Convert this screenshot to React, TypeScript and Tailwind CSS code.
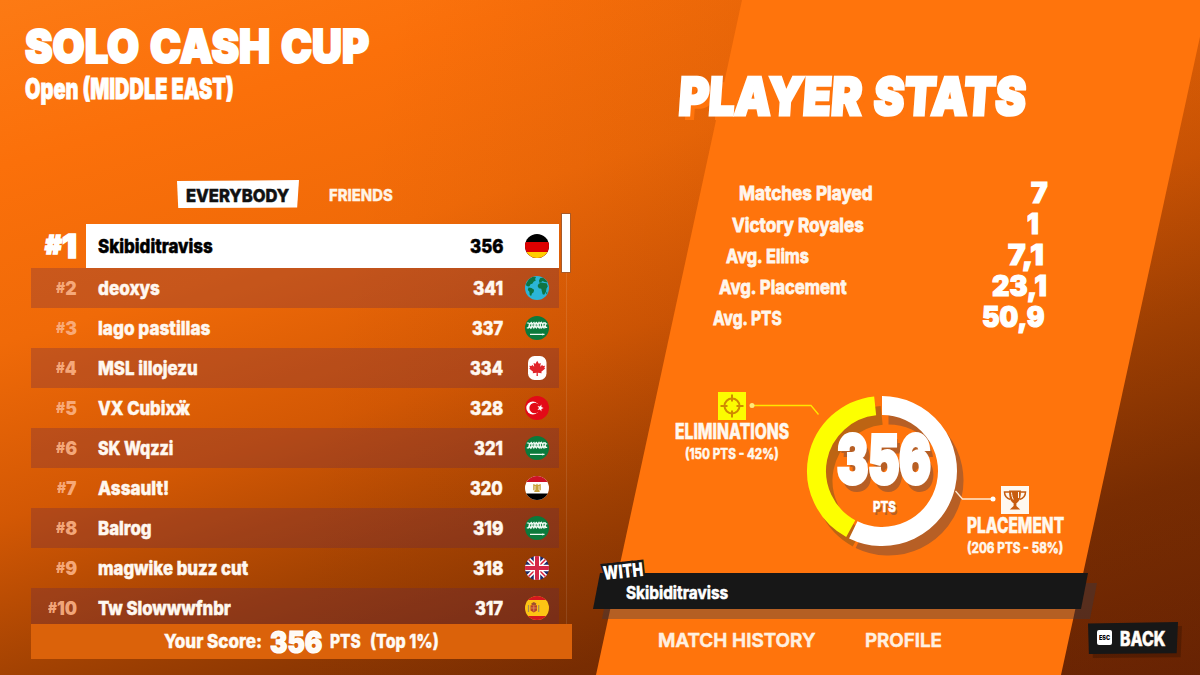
import { useLayoutEffect, useRef, useState, type ReactNode } from "react";
import clsx from "clsx";

type FlagName = "de" | "world" | "sa" | "ca" | "tr" | "eg" | "gb" | "es";

const players: { rank: number; name: string; nameW: number; score: number; scoreW: number; rankW: number; flag: FlagName }[] = [
  { rank: 1, name: "Skibiditraviss", nameW: 115, score: 356, scoreW: 33, rankW: 32, flag: "de" },
  { rank: 2, name: "deoxys", nameW: 62, score: 341, scoreW: 30, rankW: 21, flag: "world" },
  { rank: 3, name: "lago pastillas", nameW: 112, score: 337, scoreW: 31, rankW: 21, flag: "sa" },
  { rank: 4, name: "MSL illojezu", nameW: 100, score: 334, scoreW: 33, rankW: 21, flag: "ca" },
  { rank: 5, name: "VX Cubixӝ", nameW: 92, score: 328, scoreW: 33, rankW: 21, flag: "tr" },
  { rank: 6, name: "SK Wqzzi", nameW: 75, score: 321, scoreW: 29, rankW: 21, flag: "sa" },
  { rank: 7, name: "Assault!", nameW: 71, score: 320, scoreW: 33, rankW: 20, flag: "eg" },
  { rank: 8, name: "Balrog", nameW: 54, score: 319, scoreW: 30, rankW: 21, flag: "sa" },
  { rank: 9, name: "magwike buzz cut", nameW: 150, score: 318, scoreW: 30, rankW: 21, flag: "gb" },
  { rank: 10, name: "Tw Slowwwfnbr", nameW: 133, score: 317, scoreW: 28, rankW: 29, flag: "es" },
];

const stats = [
  { label: "Matches Played", labelW: 134, value: "7", valueW: 17, row: "ml-[139px] mr-[152px]" },
  { label: "Victory Royales", labelW: 132, value: "1", valueW: 12, row: "ml-[132px] mr-[161px]" },
  { label: "Avg. Elims", labelW: 83, value: "7,1", valueW: 36, row: "ml-[126px] mr-[156px]" },
  { label: "Avg. Placement", labelW: 128, value: "23,1", valueW: 55, row: "ml-[119px] mr-[153px]" },
  { label: "Avg. PTS", labelW: 69, value: "50,9", valueW: 63, row: "ml-[113px] mr-[155px]" },
];

// Squeezes a line of text to a fixed width, for the condensed display look
function Fit({ w, className, children }: { w: number; className?: string; children: ReactNode }) {
  const ref = useRef<HTMLSpanElement>(null);
  const [scale, setScale] = useState(1);

  useLayoutEffect(() => {
    if (ref.current) setScale(w / ref.current.offsetWidth);
  }, [w, children]);

  return (
    <span className={clsx("inline-block shrink-0 whitespace-nowrap", className)} style={{ width: w }}>
      <span ref={ref} className="inline-block origin-left" style={{ transform: `scaleX(${scale})` }}>
        {children}
      </span>
    </span>
  );
}

function SaudiFlag() {
  return (
    <>
      <rect width="24" height="24" fill="#0b7a3b" />
      <g fill="none" stroke="#f0faf3">
        <path d="M1.800 7h2l1 1.400 1.400-2 1.200 1.600L9 6.400l1 2 1.600-1.800 1 1.800 1.400-2 1.200 1.800 1.400-1.800 1 1.800 1.400-1.600 1.400 1.200h1.800" strokeWidth="1.200" />
        <path d="M1.800 11.800h1.800l.8-2.200 1.400 2.400 1.600-2 1.400 2 1-2.400 1.600 2.200 1.400-2 1.400 2.200 1-2.200 1.400 2 1.200-2 1.200 2 1-2 .8 1.600h1.400" strokeWidth="1.300" />
        <path d="M4.200 7v5M6.600 6v6.500M9 8v4M11 6v6M13.400 7v5M15.600 6v6.500M18 7v5M20.400 6.200v6" strokeWidth=".9" />
        <path d="M5 18.400h14.500M17.600 17.600v1.600" strokeWidth="1.200" />
      </g>
    </>
  );
}

function Flag({ name }: { name: FlagName }) {
  return (
    <svg viewBox="0 0 24 24" className={clsx("size-6 shrink-0", name === "ca" ? "" : "rounded-full")}>
      {name === "de" && (
        <>
          <rect width="24" height="24" fill="#000" />
          <rect y="8" width="24" height="16" fill="#dd0000" />
          <rect y="18" width="24" height="6" fill="#ffce00" />
        </>
      )}
      {name === "world" && (
        <>
          <rect width="24" height="24" fill="#2bb5d8" />
          <g fill="#0e7443">
            <path d="M1 8l3-5 4-2.500 3 .6-1 2.200 1 1-2.400 1.500-1.300 2-1.800.5-.8 1.600-1 .6L1.500 10z" />
            <path d="M3.500 11.500l3 .4 2.600 1.800-.5 2.500-1.600 1.200-.9 2.600-1.400-1-.3-3.200L2.800 14z" />
            <path d="M13.500 8l2.500-1.600 3 .5 2.600.3 1.200 3-1.300 2.300-.5 3.200-1.800 3-1.600-.4-.8-3.300-.5-2.200-2.500-.6-1.200-2.200z" />
            <path d="M14 4.600l1-2.400 3-.6 3.500 3 1.400 2-3.200-.5-2.200-1-1.700 1.400-1.500.2zM21.200 16.800l.9-1.400.2 2-.9 1z" />
          </g>
        </>
      )}
      {name === "sa" && <SaudiFlag />}
      {name === "ca" && (
        <>
          <rect x="3" width="18.500" height="24" rx="6.500" fill="#fff" />
          <path
            d="M12.200 4.800l1.700 3 1.900-.9-.6 3.800 2.100-1.900.5 1.200 2.300-.3-.8 2.200 1 .7-4 3.200.4 1.500-3.900-.5.1 3.200h-1.400l.1-3.200-3.900.5.4-1.500-4-3.200 1-.7-.8-2.200 2.300.3.5-1.200 2.100 1.900-.6-3.800 1.900.9z"
            fill="#e0242b"
          />
        </>
      )}
      {name === "tr" && (
        <>
          <rect width="24" height="24" fill="#e30a17" />
          <circle cx="7.800" cy="12" r="6.500" fill="#fff" />
          <circle cx="9.600" cy="12" r="5.200" fill="#e30a17" />
          <path d="M18.600 12l-2.200.9v2.500l-1.500-2-2.400.7 1.500-2.100-1.500-2.100 2.400.7 1.500-2v2.500z" fill="#fff" />
        </>
      )}
      {name === "eg" && (
        <>
          <rect width="24" height="24" fill="#fff" />
          <rect width="24" height="6" fill="#ce1126" />
          <rect y="17.500" width="24" height="6.500" fill="#000" />
          <path d="M12 7.400l1 1.600 2.800-.9v6.400l-1.600-1 .6 2.500H9.200l.6-2.500-1.600 1V8.100l2.800.9z" fill="#c9a23c" />
          <path d="M10 10v4M14 10v4" stroke="#fff" strokeWidth=".7" />
        </>
      )}
      {name === "gb" && (
        <>
          <rect width="24" height="24" fill="#1f2c6d" />
          <path d="M0 0l24 24M24 0L0 24" stroke="#fff" strokeWidth="4.500" />
          <path d="M0 0l24 24M24 0L0 24" stroke="#d8203a" strokeWidth="1.500" />
          <path d="M12 0v24M0 12h24" stroke="#fff" strokeWidth="6.500" />
          <path d="M12 0v24M0 12h24" stroke="#d42748" strokeWidth="4" />
        </>
      )}
      {name === "es" && (
        <>
          <rect width="24" height="24" fill="#fdc414" />
          <rect width="24" height="4" fill="#d5171f" />
          <rect y="20" width="24" height="4" fill="#d5171f" />
          <path d="M3.500 9v7M13.700 9v7" stroke="#a58a58" strokeWidth="1.200" />
          <path d="M5.500 9.200h6.500v5.300l-3.200 2-3.300-2z" fill="#b8402a" />
          <path d="M6.200 7.600l2.600-1.600 2.600 1.600-.6 1.300h-4z" fill="#a0522d" />
          <path d="M8.800 9.500v6M5.800 12h6" stroke="#e3a35a" strokeWidth=".7" />
        </>
      )}
    </svg>
  );
}

function PlayerRow({ player }: { player: (typeof players)[number] }) {
  const first = player.rank === 1;

  return (
    <div
      className={clsx(
        "flex shrink-0 items-center",
        first ? "h-11 text-black" : "h-10 text-[#fff8f0]",
        !first && player.rank % 2 === 0 && "bg-[#5c2350]/28"
      )}
    >
      <div
        className={clsx(
          "flex w-[55px] shrink-0 items-center justify-end self-stretch pr-[9px]",
          first ? "text-[33px] font-black text-white" : "text-[18.500px] font-black text-[#fbb184]"
        )}
      >
        <Fit w={player.rankW} className={clsx("leading-none", first ? "[-webkit-text-stroke:1.600px_white]" : "opacity-90")}>
          <span className="relative -top-[0.12em] text-[0.78em]">#</span>
          {player.rank}
        </Fit>
      </div>
      <div
        className={clsx(
          "flex flex-1 items-center self-stretch pr-2.5 pl-3 text-[19px] font-extrabold [-webkit-text-stroke:0.5px_currentColor]",
          first && "bg-white"
        )}
      >
        <Fit w={player.nameW} className="pt-0.5">
          {player.name}
        </Fit>
        <Fit w={player.scoreW} className="pt-0.5 ml-auto">
          {player.score}
        </Fit>
        <div className="ml-[22px] flex">
          <Flag name={player.flag} />
        </div>
      </div>
    </div>
  );
}

function Leaderboard() {
  return (
    <section className="flex w-[600px] shrink-0 flex-col">
      <h1 className="mt-[22px] ml-[25px] text-[47px] leading-[48px] font-black text-white">
        <Fit w={344} className="[word-spacing:3px] [-webkit-text-stroke:2.200px_white]">SOLO CASH CUP</Fit>
      </h1>
      <h2 className="mt-[4px] ml-[25px] text-[28px] leading-[30px] font-black text-white">
        <Fit w={209} className="[-webkit-text-stroke:0.8px_white]">Open (MIDDLE EAST)</Fit>
      </h2>

      <div className="mt-[76px] ml-[177px] flex h-7 items-center">
        <div className="flex h-7 w-[122px] items-center bg-white pt-[3px] pl-[9px] text-[18px] font-extrabold text-[#111] [-webkit-text-stroke:0.5px_#111] [clip-path:polygon(0_4%,100%_0,98.500%_98%,1%_100%)]">
          <Fit w={103}>EVERYBODY</Fit>
        </div>
        <div className="ml-[30px] pt-0.5 text-[16px] font-extrabold text-[#fff3e6] [-webkit-text-stroke:0.3px_#fff3e6]">
          <Fit w={64}>FRIENDS</Fit>
        </div>
      </div>

      <div className="mt-4 ml-[31px] flex h-[400px]">
        <div className="flex w-[528px] flex-col overflow-hidden">
          {players.map((p) => (
            <PlayerRow key={p.rank} player={p} />
          ))}
        </div>
        <div className="-mt-[11px] ml-0.5 flex w-[10px] flex-col items-center">
          <div className="h-[60px] w-full shrink-0 border border-[#a85a28] bg-white" />
          <div className="w-px flex-1 bg-white/10" />
        </div>
      </div>

      <div className="ml-[31px] flex h-[35px] w-[541px] items-center bg-[#db620a] pl-[133px] text-[19px] font-extrabold text-[#fffaf4] [-webkit-text-stroke:0.4px_#fffaf4]">
        <Fit w={98} className="pt-px">Your Score:</Fit>
        <Fit w={52} className="ml-2 text-[30px] leading-[30px] font-black [-webkit-text-stroke:1.200px_white]">356</Fit>
        <Fit w={31} className="ml-2 pt-px">PTS</Fit>
        <Fit w={69} className="ml-[9px] pt-px">(Top 1%)</Fit>
      </div>
    </section>
  );
}

function Callout({ title, titleW, detail, detailW, className, children }: {
  title: string;
  titleW: number;
  detail: string;
  detailW: number;
  className?: string;
  children: ReactNode;
}) {
  return (
    <div className={clsx("flex shrink-0 flex-col items-center text-[#fff8ee]", className)}>
      {children}
      <Fit w={titleW} className="mt-px text-[21px] leading-[22px] font-extrabold [-webkit-text-stroke:0.5px_#fff8ee]">{title}</Fit>
      <Fit w={detailW} className="mt-px text-[14.500px] leading-5 font-bold [-webkit-text-stroke:0.6px_#fff8ee]">{detail}</Fit>
    </div>
  );
}

function arc(from: number, to: number) {
  const r = 65.5;
  const point = (deg: number) => {
    const a = ((deg - 90) * Math.PI) / 180;
    return `${75 + r * Math.cos(a)} ${75 + r * Math.sin(a)}`;
  };
  return `M${point(from)}A${r} ${r} 0 ${to - from > 180 ? 1 : 0} 1 ${point(to)}`;
}

function ScoreChart() {
  return (
    <div className="relative ml-[18px] size-[150px] shrink-0">
      <svg viewBox="0 0 150 150" className="absolute inset-0 size-full overflow-visible" fill="none">
        <g strokeWidth="19" stroke="#b75f25" transform="translate(6.500 9.500)">
          <path d={arc(0, 206)} />
          <path d={arc(208.5, 354)} stroke="#bd6413" />
        </g>
        <g strokeWidth="19">
          <path d={arc(0, 206)} stroke="#fff" />
          <path d={arc(208.5, 354)} stroke="#fdff00" />
        </g>
        <path d="M-55 9.500H4l7.500 9" stroke="#ffe600" strokeWidth="1.300" />
        <circle cx="-55" cy="9.500" r="2.500" fill="#ffe97a" />
        <path d="M148.500 95l7 8h30.500" stroke="#ffe9d0" strokeWidth="1.300" />
        <circle cx="186" cy="103" r="2.500" fill="#fff" />
      </svg>
      <div className="relative flex flex-col items-center pt-[30px] pl-[3px] text-white">
        <Fit w={94} className="text-[66px] leading-[66px] font-black [-webkit-text-stroke:4px_white] [text-shadow:3px_4px_0_#b75f25,6px_8px_0_#b75f25]">
          356
        </Fit>
        <Fit w={23} className="mt-[5px] ml-[2px] text-[15px] leading-5 font-extrabold [-webkit-text-stroke:0.5px_white] [text-shadow:2px_3px_0_#b75f25]">PTS</Fit>
      </div>
    </div>
  );
}

function PlayerStats() {
  return (
    <section className="flex w-[600px] shrink-0 flex-col">
      <h2 className="mt-[70px] ml-[79px] -skew-x-[4deg] text-[52px] leading-[54px] font-black text-white">
        <Fit w={347} className="[word-spacing:3px] [-webkit-text-stroke:2.800px_white] [text-shadow:6px_5px_0_#ff740c]">PLAYER STATS</Fit>
      </h2>

      <div className="mt-[53px] flex flex-col">
        {stats.map((s) => (
          <div key={s.label} className={clsx("flex h-[31.2px] items-center justify-between text-[#fff6ec]", s.row)}>
            <Fit w={s.labelW} className="pt-1 text-[19px] font-bold [-webkit-text-stroke:0.8px_#fff6ec]">{s.label}</Fit>
            <Fit w={s.valueW} className="text-[28px] leading-none font-black text-white [-webkit-text-stroke:1.200px_white]">{s.value}</Fit>
          </div>
        ))}
      </div>

      <div className="mt-[59px] flex h-[180px] items-start pl-[75px]">
        <Callout title="ELIMINATIONS" titleW={114} detail="(150 PTS - 42%)" detailW={94}>
          <svg viewBox="0 0 28 28" className="size-7 bg-[#fcfc00]" fill="none" stroke="#d08a00" strokeWidth="2">
            <circle cx="14" cy="14" r="7.500" />
            <path d="M14 2.500v7M14 18.500v7M2.500 14h7M18.500 14h7" />
          </svg>
        </Callout>
        <div className="pt-1">
          <ScoreChart />
        </div>
        <Callout title="PLACEMENT" titleW={97} detail="(206 PTS - 58%)" detailW={96} className="ml-[9.500px] pt-[94px]">
          <svg viewBox="0 0 28 28" className="size-7 bg-[#fff8f0]" fill="none">
            <path d="M8 4.500h12c0 7-1.500 11-4.600 12.700V20l3.800 3.500H8.800l3.800-3.500v-2.800C9.500 15.500 8 11.500 8 4.500z" fill="#c75c10" />
            <path d="M8 6H3.500c0 4 2.500 6.500 6 7.500M20 6h4.500c0 4-2.500 6.500-6 7.500" stroke="#c75c10" strokeWidth="1.500" />
            <path d="M17.500 6v6M10.500 6.500c.2 3 .8 5 1.800 7" stroke="#fff8f0" strokeWidth="1" />
          </svg>
        </Callout>
      </div>

      {/* Teammates */}
      <div className="relative mt-px ml-[-7px] h-9 w-[495px]">
        <div className="absolute top-[10px] left-[9px] h-9 w-[495px] bg-[#2c3a50]/35 [clip-path:polygon(7px_0,100%_0,calc(100%_-_7px)_100%,0_100%)]" />
        <div className="relative flex h-9 items-center bg-[#171717] pt-1 pl-[33px] text-[18px] font-bold text-white [-webkit-text-stroke:0.6px_white] [clip-path:polygon(7px_0,100%_0,calc(100%_-_7px)_100%,0_100%)]">
          <Fit w={102}>Skibiditraviss</Fit>
        </div>
        <div className="absolute -top-[12px] left-[10px] -rotate-6 text-[19px] leading-[22px] font-black text-white [paint-order:stroke_fill] [-webkit-text-stroke:5px_#171717]">
          <Fit w={40}>WITH</Fit>
        </div>
      </div>

      <div className="mt-[11px] flex h-9 items-center pl-[58px] text-[19px] font-semibold text-[#fff0e0] [-webkit-text-stroke:0.6px_#fff0e0]">
        <Fit w={157} className="pt-1.5">MATCH HISTORY</Fit>
        <Fit w={77} className="ml-[50px] pt-1.5">PROFILE</Fit>
        <button className="relative ml-[146px] h-8 w-[90px] shrink-0">
          <span className="absolute top-1 left-1 h-8 w-[90px] bg-black/20 [clip-path:polygon(0_5%,100%_0,98.500%_98%,1%_100%)]" />
          <span className="relative flex h-8 w-[90px] items-center bg-[#171717] pl-[9px] [clip-path:polygon(0_5%,100%_0,98.500%_98%,1%_100%)]">
            <span className="mb-px flex size-[15px] items-center justify-center rounded-[2px] bg-white text-[6px] font-black text-black [-webkit-text-stroke:0]">
              <Fit w={11}>ESC</Fit>
            </span>
            <Fit w={45} className="ml-2 pt-0.5 text-[20px] font-extrabold text-white">BACK</Fit>
          </span>
        </button>
      </div>
    </section>
  );
}

export default function App() {
  return (
    <main className="relative flex h-[675px] w-[1200px] overflow-hidden bg-[linear-gradient(163deg,#fc7a14_0%,#fb700a_16%,#f06a08_33%,#d35804_50%,#a34202_65%,#782d02_81%,#652203_100%)] font-['Inter','Liberation_Sans',sans-serif]">
      <div className="absolute inset-0 bg-[linear-gradient(100deg,transparent_30%,rgba(120,40,0,0.12)_62%)]" />
      <div className="absolute inset-0 bg-[#ff740c] [clip-path:polygon(742px_0,1208px_0,1061px_100%,596px_100%)]" />
      <div className="relative flex">
        <Leaderboard />
        <PlayerStats />
      </div>
    </main>
  );
}
